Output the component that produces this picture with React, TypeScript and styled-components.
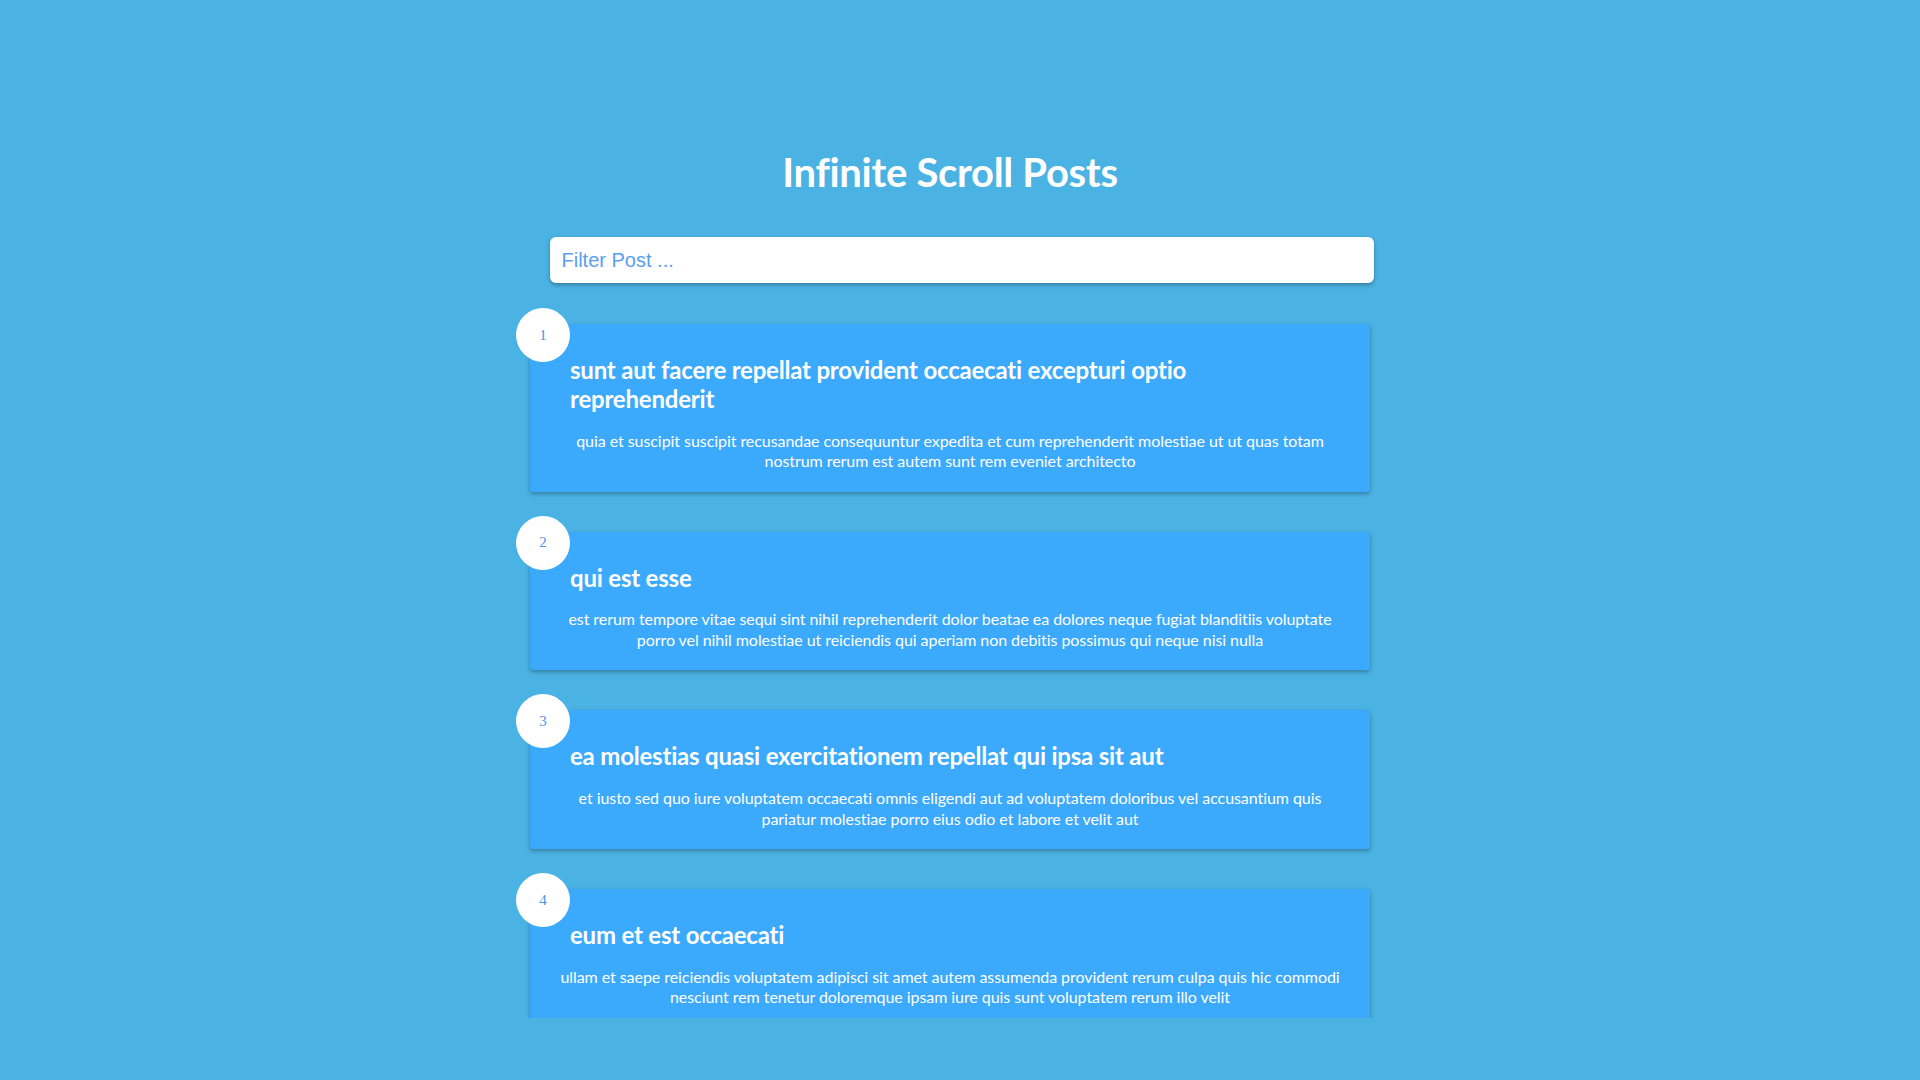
import React from "react";
import styled, { createGlobalStyle } from "styled-components";

const GlobalStyle = createGlobalStyle`
  html, body {
    margin: 0;
    padding: 0;
    background: #4bb3e3;
  }
  * { box-sizing: border-box; }
`;

const Viewport = styled.div`
  height: 1018px;
  overflow: hidden;
`;

const Page = styled.main`
  width: 1900px;
  display: flex;
  flex-direction: column;
  align-items: center;
  padding-top: 148px;
  font-family: Lato, "Liberation Sans", sans-serif;
`;

const Title = styled.h1`
  margin: 0 0 41px;
  font-size: 40px;
  line-height: 48px;
  font-weight: 700;
  letter-spacing: -0.3px;
  color: #ffffff;
`;

const FilterInput = styled.input`
  width: 824px;
  height: 46px;
  margin: 0 0 41px 23px;
  padding: 0 12px;
  border: none;
  border-radius: 6px;
  background: #ffffff;
  box-shadow: 0 2px 4px rgba(0, 0, 0, 0.3);
  font-family: "Liberation Sans", Arial, sans-serif;
  font-size: 20px;
  color: #3d8df0;
  outline: none;
  &::placeholder {
    color: #5a9ef2;
  }
`;

const PostList = styled.section`
  display: flex;
  flex-direction: column;
  gap: 40px;
`;

const Card = styled.article`
  position: relative;
  width: 840px;
  padding: 20px;
  background: #3ba9fc;
  border-radius: 3px;
  box-shadow: 0 2px 4px rgba(0, 0, 0, 0.3);
  color: #ffffff;
`;

const Number = styled.div`
  position: absolute;
  top: -16px;
  left: -14px;
  width: 54px;
  height: 54px;
  border-radius: 50%;
  background: #ffffff;
  color: #4a95ef;
  display: flex;
  align-items: center;
  justify-content: center;
  font-family: "Liberation Serif", "Times New Roman", serif;
  font-size: 15px;
`;

const PostTitle = styled.h2`
  margin: 12px 20px 0;
  font-size: 24px;
  line-height: 28.8px;
  font-weight: 700;
  letter-spacing: -0.2px;
`;

const PostBody = styled.p`
  margin: 17px 0 0;
  font-size: 16px;
  line-height: 20.5px;
  letter-spacing: -0.06px;
  text-align: center;
`;

const posts = [
  {
    id: 1,
    title: "sunt aut facere repellat provident occaecati excepturi optio reprehenderit",
    body: "quia et suscipit suscipit recusandae consequuntur expedita et cum reprehenderit molestiae ut ut quas totam nostrum rerum est autem sunt rem eveniet architecto",
  },
  {
    id: 2,
    title: "qui est esse",
    body: "est rerum tempore vitae sequi sint nihil reprehenderit dolor beatae ea dolores neque fugiat blanditiis voluptate porro vel nihil molestiae ut reiciendis qui aperiam non debitis possimus qui neque nisi nulla",
  },
  {
    id: 3,
    title: "ea molestias quasi exercitationem repellat qui ipsa sit aut",
    body: "et iusto sed quo iure voluptatem occaecati omnis eligendi aut ad voluptatem doloribus vel accusantium quis pariatur molestiae porro eius odio et labore et velit aut",
  },
  {
    id: 4,
    title: "eum et est occaecati",
    body: "ullam et saepe reiciendis voluptatem adipisci sit amet autem assumenda provident rerum culpa quis hic commodi nesciunt rem tenetur doloremque ipsam iure quis sunt voluptatem rerum illo velit",
  },
];

export default function App() {
  return (
    <>
      <GlobalStyle />
      <Viewport>
        <Page>
          <Title>Infinite Scroll Posts</Title>
          <FilterInput type="text" placeholder="Filter Post ..." />
          <PostList>
            {posts.map((p) => (
              <Card key={p.id}>
                <Number>{p.id}</Number>
                <PostTitle>{p.title}</PostTitle>
                <PostBody>{p.body}</PostBody>
              </Card>
            ))}
          </PostList>
        </Page>
      </Viewport>
    </>
  );
}
